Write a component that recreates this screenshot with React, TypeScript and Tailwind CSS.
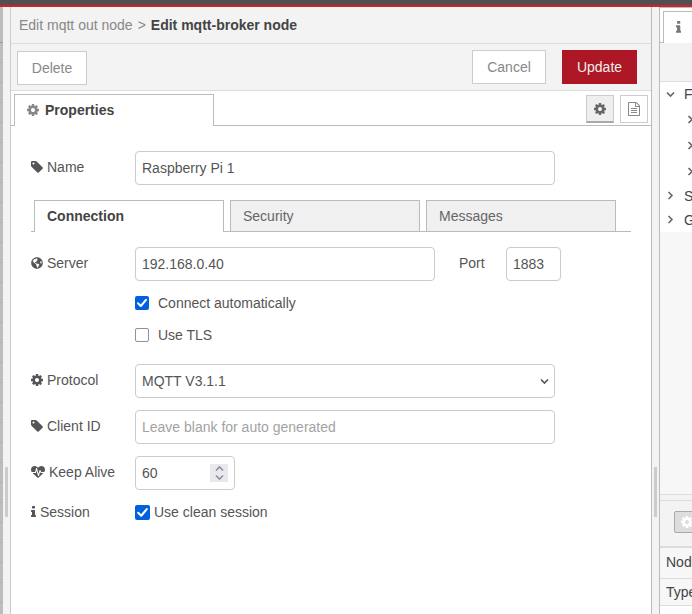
import type { ReactNode } from "react";
import { FaGlobeAmericas } from "react-icons/fa";

const ICONS = {
  tag: "M576 448q0-53-37.5-90.5t-90.5-37.5-90.5 37.5-37.5 90.5 37.5 90.5 90.5 37.5 90.5-37.5 37.5-90.5zm1067 576q0 53-37 90l-491 492q-39 37-91 37-53 0-90-37l-715-716q-38-37-64.5-101t-26.5-117v-416q0-52 38-90t90-38h416q53 0 117 26.5t102 64.5l715 714q37 39 37 91z",
  cog: "M1152 896q0-106-75-181t-181-75-181 75-75 181 75 181 181 75 181-75 75-181zm512-109v222q0 12-8 23t-20 13l-185 28q-19 54-39 91 35 50 107 138 10 12 10 25t-9 23q-27 37-99 108t-94 71q-12 0-26-9l-138-108q-44 23-91 38-16 136-29 186-7 28-36 28h-222q-14 0-24.5-8.5t-11.5-21.5l-28-184q-49-16-90-37l-141 107q-10 9-25 9-14 0-25-11-126-114-165-168-7-10-7-23 0-12 8-23 15-21 51-66.5t54-70.5q-27-50-41-99l-183-27q-13-2-21-12.5t-8-23.5v-222q0-12 8-23t19-13l186-28q14-46 39-92-40-57-107-138-10-12-10-24 0-10 9-23 26-36 98.5-107.5t94.5-71.5q13 0 26 10l138 107q44-23 91-38 16-136 29-186 7-28 36-28h222q14 0 24.5 8.5t11.5 21.5l28 184q49 16 90 37l142-107q9-9 24-9 13 0 25 10 129 119 165 170 7 8 7 22 0 12-8 23-15 21-51 66.5t-54 70.5q26 50 41 98l183 28q13 2 21 12.5t8 23.5z",
  info: "M1216 1344v128q0 26-19 45t-45 19h-512q-26 0-45-19t-19-45v-128q0-26 19-45t45-19h64v-384h-64q-26 0-45-19t-19-45v-128q0-26 19-45t45-19h384q26 0 45 19t19 45v576h64q26 0 45 19t19 45zm-128-1152v192q0 26-19 45t-45 19h-256q-26 0-45-19t-19-45v-192q0-26 19-45t45-19h256q26 0 45 19t19 45z",
  heartbeat:
    "M1280 1024h305q-5 6-10 10.5t-9 7.5l-3 4-623 600q-18 18-44 18t-44-18l-624-602q-5-2-21-20h369q22 0 39.5-13.5t22.5-34.5l70-281 190 667q6 20 23 33t39 13q21 0 38-13t23-33l146-485 56 112q18 35 57 35zm512-428q0 145-103 300h-369l-111-221q-8-17-25.5-27t-36.5-8q-45 5-56 46l-129 430-196-686q-6-20-23.5-33t-39.5-13-39 13.5-22 34.5l-116 464h-423q-103-155-103-300 0-220 127-344t351-124q62 0 126.5 21.5t120 58 95.5 68.5 76 68q36-36 76-68t95.5-68.5 120-58 126.5-21.5q224 0 351 124t127 344z",
  file: "M1596 380q28 28 48 76t20 88v1152q0 40-28 68t-68 28h-1344q-40 0-68-28t-28-68v-1600q0-40 28-68t68-28h896q40 0 88 20t76 48zm-444-244v376h376q-10-29-22-41l-313-313q-12-12-41-22zm384 1528v-1024h-416q-40 0-68-28t-28-68v-416h-768v1536h1280zm-1024-864q0-14 9-23t23-9h704q14 0 23 9t9 23v64q0 14-9 23t-23 9h-704q-14 0-23-9t-9-23v-64zm736 224q14 0 23 9t9 23v64q0 14-9 23t-23 9h-704q-14 0-23-9t-9-23v-64q0-14 9-23t23-9h704zm0 256q14 0 23 9t9 23v64q0 14-9 23t-23 9h-704q-14 0-23-9t-9-23v-64q0-14 9-23t23-9h704z",
};

// x offset and width of each glyph inside the 1792 grid
const BOXES = {
  tag: "128 0 1536 1792",
  cog: "128 0 1536 1792",
  info: "576 0 640 1792",
  heartbeat: "0 0 1792 1792",
  file: "128 0 1536 1792",
};

function Icon({ name, className = "h-3.5" }: { name: keyof typeof ICONS; className?: string }) {
  return (
    <svg viewBox={BOXES[name]} fill="currentColor" className={`shrink-0 ${className}`}>
      <path d={ICONS[name]} />
    </svg>
  );
}

function Chevron({ className = "" }: { className?: string }) {
  return (
    <svg
      viewBox="0 0 9 9"
      fill="none"
      stroke="currentColor"
      strokeWidth="1.6"
      className={`size-[9px] shrink-0 ${className}`}
    >
      <path d="M1 2.5 4.5 6 8 2.5" />
    </svg>
  );
}

function Checkbox({ checked, className }: { checked: boolean; className: string }) {
  return (
    <span
      className={`flex shrink-0 items-center justify-center rounded-[2px] ${className} ${
        checked ? "bg-[#0060df]" : "border border-[#8f8f9d] bg-white"
      }`}
    >
      {checked && (
        <svg viewBox="0 0 14 14" fill="none" stroke="white" strokeWidth="2" className="size-full">
          <path d="M3 7.3 5.8 10 11 3.8" strokeLinecap="round" strokeLinejoin="round" />
        </svg>
      )}
    </span>
  );
}

function Row({ icon, label, children }: { icon: ReactNode; label: string; children: ReactNode }) {
  return (
    <div className="flex h-[34px]">
      <div className="flex h-8 w-[104px] shrink-0 items-center gap-1">
        {icon}
        <span>{label}</span>
      </div>
      {children}
    </div>
  );
}

function Field({ className, children }: { className: string; children: ReactNode }) {
  return (
    <div className={`flex h-[34px] items-center rounded-[4px] border border-[#ccc] bg-white px-1.5 ${className}`}>
      {children}
    </div>
  );
}

const tree = [
  { label: "F", open: true, row: "h-[25px]", pad: "pl-1.5" },
  { label: "", open: false, row: "h-[26px]", pad: "pl-[26px]" },
  { label: "", open: false, row: "h-[26px]", pad: "pl-[26px]" },
  { label: "", open: false, row: "h-[25px]", pad: "pl-[26px]" },
  { label: "S", open: false, row: "h-6", pad: "pl-1.5" },
  { label: "G", open: false, row: "h-6", pad: "pl-1.5" },
];

function Sidebar() {
  return (
    <aside className="flex w-[33px] shrink-0 flex-col overflow-hidden whitespace-nowrap border-l border-[#bbb] bg-[#f7f7f7] text-[#444]">
      <div className="flex h-9 shrink-0 items-end border-t border-[#bbb] bg-white">
        <div className="h-px w-[3px] shrink-0 bg-[#bbb]" />
        <div className="flex h-8 w-20 shrink-0 items-center border-l border-t border-[#bbb] pb-px pl-3 text-[#777]">
          <Icon name="info" className="h-[15px]" />
        </div>
      </div>
      <div className="h-[39px] shrink-0 border-b border-[#ddd] bg-[#f3f3f3]" />
      <div className="shrink-0 bg-white">
        {tree.map((item, i) => (
          <div key={i} className={`flex items-center gap-[9px] pb-px ${item.row} ${item.pad}`}>
            <Chevron className={item.open ? "text-[#666]" : "-rotate-90 text-[#666]"} />
            <span>{item.label}</span>
          </div>
        ))}
      </div>
      <div className="min-h-0 flex-1" />
      <div className="h-[7px] shrink-0 border-y border-[#ddd] bg-[#f3f3f3]" />
      <div className="h-[47px] shrink-0 border-b-2 border-[#ddd] bg-[#f3f3f3] pl-3.5 pt-2.5">
        <div className="flex h-[22px] w-10 items-center rounded-[2px] border border-[#aaa] bg-[#ddd] pl-1.5 text-white">
          <Icon name="cog" />
        </div>
      </div>
      <div className="flex h-[31px] shrink-0 items-center border-b border-[#ddd] pb-[3px] pl-1.5">Node</div>
      <div className="flex h-[27px] shrink-0 items-center border-b border-[#ddd] pl-1.5">Type</div>
      <div className="h-[8px] shrink-0 bg-white" />
    </aside>
  );
}

export default function App() {
  return (
    <div className="flex h-[614px] w-[692px] flex-col overflow-hidden bg-white font-['Liberation_Sans',Arial,sans-serif] text-[14px] leading-5 text-[#555]">
      <div className="h-[7px] shrink-0 border-b-2 border-[#d32127] bg-[#505050]" />
      <div className="flex min-h-0 flex-1">
        {/* edge of the workspace grid behind the tray */}
        <div className="w-[3px] shrink-0 bg-[#bdbdbd] pt-[35px]">
          <div className="h-px bg-[#999]" />
          {Array.from({ length: 28 }, (_, i) => (
            <div key={i} className="h-5 border-b border-[#b0b0b0]" />
          ))}
        </div>
        <div className="flex w-2 shrink-0 items-center border-r border-[#ccc] bg-[#f3f3f3] pl-0.5 pt-[363px]">
          <div className="h-[50px] w-[3px] bg-[#ccc]" />
        </div>

        <main className="flex w-[640px] shrink-0 flex-col">
          <header className="flex h-[37px] shrink-0 items-center border-b border-[#ddd] bg-[#f3f3f3] pl-2 text-[#888]">
            <span>Edit mqtt out node</span>
            <span className="mx-[5px]">&gt;</span>
            <span className="font-bold text-[#444]">Edit mqtt-broker node</span>
          </header>

          <div className="flex h-[47px] shrink-0 items-start border-b border-[#ddd] bg-[#f3f3f3] pl-1.5 pr-3.5 pt-1.5 text-[#888]">
            <button className="mt-px h-[34px] w-[70px] border border-[#ccc] bg-white">Delete</button>
            <button className="ml-auto h-[34px] w-[74px] border border-[#ccc] bg-white">Cancel</button>
            <button className="ml-4 h-[34px] w-[75px] bg-[#ad1625] text-[#eee]">Update</button>
          </div>

          <div className="flex h-[35px] shrink-0 items-end">
            <div className="h-px w-[3px] bg-[#bbb]" />
            <div className="flex h-8 w-[200px] items-center gap-1.5 border-x border-t border-[#bbb] pb-0.5 pl-3 font-bold text-[#444]">
              <Icon name="cog" className="h-[14px] text-[#888]" />
              Properties
            </div>
            <div className="flex h-full flex-1 justify-end gap-1.5 border-b border-[#bbb] pr-[3px] pt-1">
              <div className="flex h-7 w-7 items-center justify-center border border-b-2 border-[#ccc] border-b-[#aaa] bg-[#efefef] text-[#666]">
                <Icon name="cog" />
              </div>
              <div className="flex h-7 w-7 items-center justify-center border border-[#ccc] bg-white text-[#888]">
                <Icon name="file" />
              </div>
            </div>
          </div>

          <div className="px-5 pt-[25px]">
            <Row icon={<Icon name="tag" />} label="Name">
              <Field className="w-[420px]">Raspberry Pi 1</Field>
            </Row>

            <div className="mt-[15px] flex h-8 items-end">
              <div className="h-px w-[3px] bg-[#bbb]" />
              <div className="flex h-8 w-[190px] items-center border-x border-t border-[#bbb] pb-0.5 pl-3 font-bold text-[#444]">
                Connection
              </div>
              <div className="flex h-8 flex-1 gap-1.5 border-b border-[#bbb] pl-1.5">
                <div className="flex w-[190px] items-center border-x border-t border-[#bbb] bg-[#f0f0f0] pl-3 text-[#666]">
                  Security
                </div>
                <div className="flex w-[190px] items-center border-x border-t border-[#bbb] bg-[#f0f0f0] pl-3 text-[#666]">
                  Messages
                </div>
              </div>
            </div>

            <div className="mt-[15px]">
              <Row icon={<FaGlobeAmericas className="size-3 shrink-0" />} label="Server">
                <Field className="w-[300px]">192.168.0.40</Field>
                <div className="flex h-8 w-[71px] items-center pl-6">Port</div>
                <Field className="w-[55px]">1883</Field>
              </Row>
            </div>

            <div className="mt-3 flex h-5 items-center gap-[9px] pl-[104px]">
              <Checkbox checked className="size-3.5" />
              Connect automatically
            </div>
            <div className="mt-3 flex h-5 items-center gap-[9px] pl-[104px]">
              <Checkbox checked={false} className="size-3.5" />
              Use TLS
            </div>

            <div className="mt-[19px] flex flex-col gap-3">
              <Row icon={<Icon name="cog" />} label="Protocol">
                <Field className="w-[420px] justify-between !pr-[5px]">
                  MQTT V3.1.1
                  <Chevron />
                </Field>
              </Row>
              <Row icon={<Icon name="tag" />} label="Client ID">
                <Field className="w-[420px] text-[#a3a3a3]">Leave blank for auto generated</Field>
              </Row>
              <Row icon={<Icon name="heartbeat" />} label="Keep Alive">
                <Field className="w-[100px] justify-between">
                  60
                  <span className="flex h-[18px] w-[18px] flex-col items-center justify-between bg-[#e9e9ed] text-[#8f8f9d]">
                    <Chevron className="rotate-180" />
                    <Chevron />
                  </span>
                </Field>
              </Row>
              <div className="flex h-5 items-center">
                <div className="flex w-[104px] items-center gap-1">
                  <Icon name="info" />
                  Session
                </div>
                <Checkbox checked className="size-[15px]" />
                <span className="ml-1">Use clean session</span>
              </div>
            </div>
          </div>
        </main>

        <div className="flex w-2 shrink-0 items-center border-l border-[#bbb] bg-[#f3f3f3] pl-0.5 pt-[363px]">
          <div className="h-[50px] w-[3px] bg-[#ccc]" />
        </div>
        <Sidebar />
      </div>
    </div>
  );
}
